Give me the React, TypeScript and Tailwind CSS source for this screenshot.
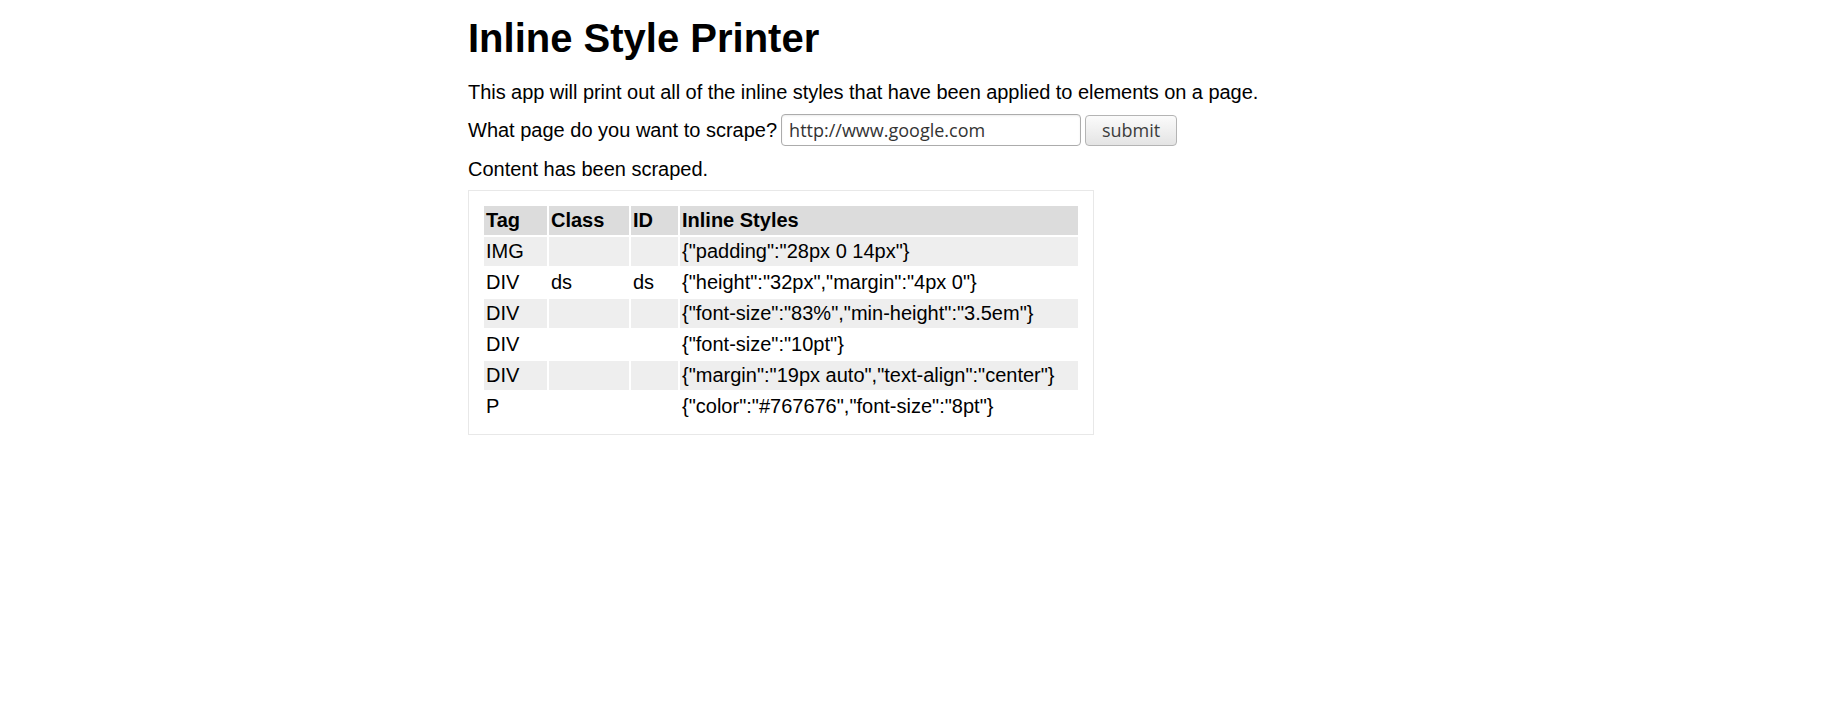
type Row = {
  tag: string;
  cls: string;
  id: string;
  styles: string;
};

const rows: Row[] = [
  { tag: "IMG", cls: "", id: "", styles: '{"padding":"28px 0 14px"}' },
  { tag: "DIV", cls: "ds", id: "ds", styles: '{"height":"32px","margin":"4px 0"}' },
  { tag: "DIV", cls: "", id: "", styles: '{"font-size":"83%","min-height":"3.5em"}' },
  { tag: "DIV", cls: "", id: "", styles: '{"font-size":"10pt"}' },
  { tag: "DIV", cls: "", id: "", styles: '{"margin":"19px auto","text-align":"center"}' },
  { tag: "P", cls: "", id: "", styles: '{"color":"#767676","font-size":"8pt"}' },
];

const cell = "h-[29px] p-0 pl-[2px] align-middle text-left";

export default function App() {
  return (
    <div className="min-h-screen bg-white font-['Liberation_Sans',Arial,sans-serif] text-black">
      <div className="mx-auto w-[905px] pt-[15px]">
        <h1 className="text-[40px] font-bold leading-[46px]">Inline Style Printer</h1>

        <p className="mt-[20px] text-[20px] leading-[23px] tracking-[-0.05px]">
          This app will print out all of the inline styles that have been applied to elements on a page.
        </p>

        <form
          className="mt-[10px] flex items-center text-[20px] leading-[23px]"
          onSubmit={(e) => e.preventDefault()}
        >
          <label htmlFor="url">What page do you want to scrape?</label>
          <input
            id="url"
            type="text"
            defaultValue="http://www.google.com"
            className="ml-[4px] h-[32px] w-[300px] rounded-[4px] border border-[#acacac] bg-white px-[7px] font-['Open_Sans',sans-serif] text-[18px] text-[#333] shadow-[inset_0_1px_2px_rgba(0,0,0,0.08)] outline-none"
          />
          <button
            type="submit"
            className="ml-[4px] h-[31px] w-[92px] rounded-[4px] border border-[#b4b4b4] bg-gradient-to-b from-[#fbfbfb] to-[#e4e4e4] font-['Open_Sans',sans-serif] text-[18px] leading-none text-[#3c3c3c]"
          >
            submit
          </button>
        </form>

        <p className="mt-[12px] text-[20px] leading-[23px]">Content has been scraped.</p>

        <div className="mt-[9px] w-[626px] border border-[#e8e8e8] px-[13px] pt-[13px] pb-[11px]">
          <table className="w-[598px] table-fixed border-separate border-spacing-[2px] text-[20px] leading-[23px]">
            <colgroup>
              <col className="w-[63px]" />
              <col className="w-[80px]" />
              <col className="w-[47px]" />
              <col className="w-[398px]" />
            </colgroup>
            <thead>
              <tr className="bg-[#dcdcdc] font-bold">
                <th className={cell}>Tag</th>
                <th className={cell}>Class</th>
                <th className={cell}>ID</th>
                <th className={cell}>Inline Styles</th>
              </tr>
            </thead>
            <tbody>
              {rows.map((r, i) => (
                <tr key={i} className={i % 2 === 0 ? "bg-[#eeeeee]" : "bg-white"}>
                  <td className={cell}>{r.tag}</td>
                  <td className={cell}>{r.cls}</td>
                  <td className={cell}>{r.id}</td>
                  <td className={cell + " whitespace-nowrap"}>{r.styles}</td>
                </tr>
              ))}
            </tbody>
          </table>
        </div>
      </div>
    </div>
  );
}
